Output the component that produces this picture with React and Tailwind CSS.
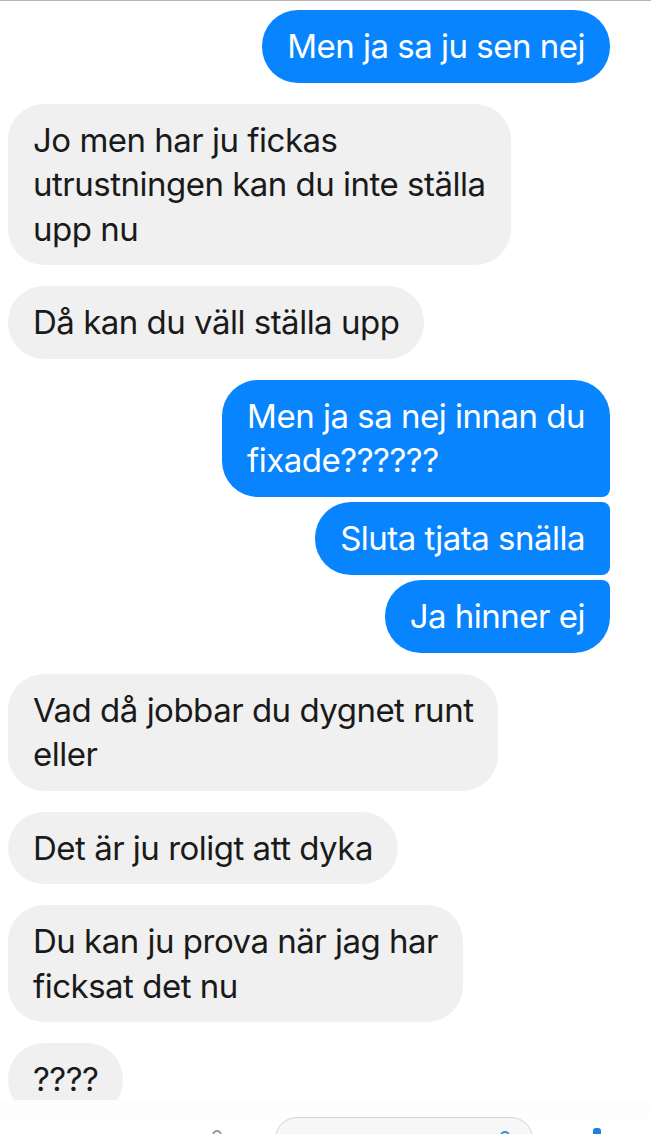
import React from "react";

const BLUE = "bg-[#0884ff] text-white";
const GRAY = "bg-[#f0f0f0] text-[#1a1a1a]";

function Bubble({ side, lines, shape }) {
  const color = side === "right" ? BLUE : GRAY;
  return (
    <div className={side === "right" ? "flex justify-end" : "flex justify-start"}>
      <div className={`${color} ${shape} px-[25px] py-[14px] whitespace-nowrap text-[33px] leading-[44.5px] tracking-[-0.5px]`}>
        {lines.map((l, i) => (
          <div key={i}>{l}</div>
        ))}
      </div>
    </div>
  );
}

export default function App() {
  return (
    <div className="w-[651px] h-[1134px] overflow-hidden bg-white flex flex-col font-['Inter',_'Noto_Sans',_sans-serif]">
      <div className="h-px shrink-0 bg-[#b4b4b4]" />
      <div className="h-[1099px] shrink-0 overflow-hidden flex flex-col gap-[21px] pt-[9px] pl-2 pr-[41px]">
        <Bubble side="right" shape="rounded-[36px]" lines={["Men ja sa ju sen nej"]} />
        <Bubble side="left" shape="rounded-[36px]" lines={["Jo men har ju fickas", "utrustningen kan du inte ställa", "upp nu"]} />
        <Bubble side="left" shape="rounded-[36px]" lines={["Då kan du väll ställa upp"]} />
        <div className="flex flex-col gap-[5.5px]">
          <Bubble side="right" shape="rounded-[36px] rounded-br-[8px]" lines={["Men ja sa nej innan du", "fixade??????"]} />
          <Bubble side="right" shape="rounded-l-[36px] rounded-r-[8px]" lines={["Sluta tjata snälla"]} />
          <Bubble side="right" shape="rounded-[36px] rounded-tr-[8px]" lines={["Ja hinner ej"]} />
        </div>
        <Bubble side="left" shape="rounded-[36px]" lines={["Vad då jobbar du dygnet runt", "eller"]} />
        <Bubble side="left" shape="rounded-[36px]" lines={["Det är ju roligt att dyka"]} />
        <Bubble side="left" shape="rounded-[36px]" lines={["Du kan ju prova när jag har", "ficksat det nu"]} />
        <Bubble side="left" shape="rounded-[36px]" lines={["????"]} />
      </div>
      <div className="h-[34px] shrink-0 bg-gradient-to-b from-[#fdfdfd] to-white flex items-start">
        <div className="ml-[212px] mt-[30px] w-[10px] h-[10px] rounded-full border-2 border-[#9a9a9a]" />
        <div className="ml-[53px] mt-[17px] w-[258px] h-[44px] rounded-full border border-[#d4d4d4] bg-[#f7f7f7] flex items-start justify-end pr-[22px]">
          <div className="mt-[13px] w-[10px] h-[10px] rounded-full border-2 border-[#2f8fe8]" />
        </div>
        <div className="ml-[60px] mt-[28px] w-[8px] h-[10px] rounded-t-[3px] bg-[#1d7fe0]" />
      </div>
    </div>
  );
}
